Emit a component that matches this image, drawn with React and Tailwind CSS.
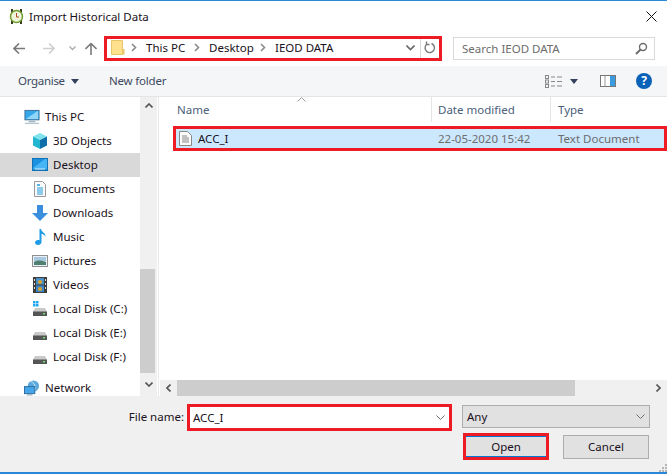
const Sep = () => (
  <svg width="6" height="9" viewBox="0 0 6 9" className="shrink-0"><path d="M1 1l3.5 3.5L1 8" fill="none" stroke="#8a8a8a" strokeWidth="1.6" /></svg>
);
const Chev = ({ c = "#707070", w = 1 }) => (
  <svg width="9" height="6" viewBox="0 0 9 6" className="shrink-0"><path d="M.5.5l4 4 4-4" fill="none" stroke={c} strokeWidth={w} /></svg>
);
const Disk = ({ win }) => (
  <svg width="16" height="16" viewBox="0 0 16 16">
    {win && <g fill="#1ea7f0"><rect x="1" y="0" width="2.5" height="2.5" /><rect x="4" y="0" width="2.5" height="2.5" /><rect x="1" y="3" width="2.5" height="2.5" /><rect x="4" y="3" width="2.5" height="2.5" /></g>}
    <path d="M3 7h10l2 4H1z" fill="#c9c9c9" />
    <rect x="1" y="10.5" width="14" height="4.5" fill="#555" />
    <rect x="11" y="12" width="2" height="1.5" fill="#6fe06f" />
  </svg>
);
const icons = {
  pc: <svg width="17" height="16" viewBox="0 0 17 16"><rect x="1" y="1" width="15" height="10" fill="#35a7ea" stroke="#3d6f96" /><path d="M2 10L14 2h1v8z" fill="#8fd6f8" /><rect x="5" y="12" width="7" height="1.5" fill="#9fb6c8" /><rect x="1" y="14" width="15" height="1.5" fill="#b9c7d2" /></svg>,
  cube: <svg width="16" height="16" viewBox="0 0 16 16"><path d="M8 0l7 3.5L8 7 1 3.5z" fill="#7fe3ee" /><path d="M1 3.5L8 7v9l-7-3.5z" fill="#22b6d0" /><path d="M15 3.5L8 7v9l7-3.5z" fill="#0f6fa8" /></svg>,
  desk: <svg width="16" height="14" viewBox="0 0 16 14"><rect x="0.5" y="0.5" width="15" height="12" fill="#1a90e0" stroke="#1272b5" /><path d="M1 10L13 1h2v10H1z" fill="#45b5f5" /><rect x="3" y="10.5" width="10" height="1" fill="#d8eefc" /></svg>,
  doc: <svg width="12" height="16" viewBox="0 0 12 16"><path d="M.5.5h8l3 3v12H.5z" fill="#fafafa" stroke="#9a9a9a" /><path d="M3 7h6M3 9h6M3 11h6M3 13h6" stroke="#1f9bdc" strokeWidth="1" /><path d="M3 4h3" stroke="#1f9bdc" strokeWidth="1.5" /></svg>,
  down: <svg width="16" height="16" viewBox="0 0 16 16"><path d="M5 0h6v8h5l-8 8-8-8h5z" fill="#3a8edb" /></svg>,
  music: <svg width="11" height="16" viewBox="0 0 11 16"><path d="M4.5 0h1.5c.5 3 4.500 3.500 4.500 7.500-1-1.500-2.500-2.500-4-2.800V13c0 1.800-1.800 3-3.500 3S0 15 0 13.500 1.500 11 3 11c.6 0 1.100.1 1.500.3z" fill="#1d9be6" /></svg>,
  pic: <svg width="16" height="12" viewBox="0 0 16 12"><rect x="0.5" y="0.500" width="15" height="11" fill="#e8f1f7" stroke="#8f8f8f" /><path d="M2 2h12v4H2z" fill="#a9c9e0" /><path d="M2 7c3-2 7-2 12 0v3H2z" fill="#4f7f70" /></svg>,
  vid: <svg width="14" height="16" viewBox="0 0 14 16"><rect width="14" height="16" fill="#3b3b3b" /><rect x="3" y="1" width="8" height="6.500" fill="#4a90c8" /><rect x="3" y="8.500" width="8" height="6.500" fill="#3f86c4" /><circle cx="7" cy="5" r="2" fill="#d9a32a" /><circle cx="7" cy="12" r="2" fill="#d9a32a" /><g fill="#ddd"><rect x="1" y="2" width="1" height="2" /><rect x="1" y="6" width="1" height="2" /><rect x="1" y="10" width="1" height="2" /><rect x="12" y="2" width="1" height="2" /><rect x="12" y="6" width="1" height="2" /><rect x="12" y="10" width="1" height="2" /></g></svg>,
  net: <svg width="17" height="16" viewBox="0 0 17 16"><circle cx="10" cy="6" r="6" fill="#5ba8dd" /><path d="M7 1c3 1 5 3 5 9" stroke="#d6ecf8" fill="none" /><rect x="0.500" y="6.500" width="11" height="7.500" fill="#45a5e8" stroke="#2c6c9c" /><rect x="3" y="14.500" width="6" height="1.500" fill="#9fb6c8" /></svg>,
};
const Row = ({ icon, label, active, top }) => (
  <div className={`h-6 flex items-center shrink-0 ${active ? "bg-[#d9d9d9]" : ""} ${top ? "pl-6" : "pl-8"}`}>
    <span className="w-4 h-4 flex items-center justify-center shrink-0 mr-[5px]">{icon}</span>
    <span className="text-[#1a1020] whitespace-nowrap">{label}</span>
  </div>
);

export default function App() {
  return (
    <div className="w-[667px] h-[474px] flex flex-col overflow-hidden bg-white border-t border-b-2 border-[#2b88d8] text-[11.5px] text-black font-['Noto_Sans','Liberation_Sans',sans-serif]">
      <div className="h-[31px] flex items-center pl-[9px] pr-[9px] shrink-0">
        <svg width="15" height="15" viewBox="0 0 15 15" className="mr-[5px]"><rect x="2" y="0" width="2" height="15" fill="#3a3a20" /><rect x="11" y="0" width="2" height="15" fill="#3a3a20" /><circle cx="7.500" cy="7.500" r="6" fill="#eef5d8" stroke="#6f9e2e" strokeWidth="1.500" /><path d="M7.500 4v4h2.500" stroke="#b2472a" fill="none" /></svg>
        <span className="text-[#1a1020]">Import Historical Data</span>
        <svg width="11" height="11" viewBox="0 0 11 11" className="ml-auto mr-[1px]"><path d="M.5.500l10 10M10.500.500l-10 10" stroke="#111" strokeWidth="1" /></svg>
      </div>
      <div className="h-[34px] pb-px flex items-center shrink-0">
        <div className="w-[104px] flex items-center pl-[13px] shrink-0">
          <svg width="12" height="11" viewBox="0 0 12 11"><path d="M6 .500L1 5.500l5 5M1 5.500h11" fill="none" stroke="#7a7a7a" strokeWidth="1.600" /></svg>
          <svg width="12" height="11" viewBox="0 0 12 11" className="ml-[18px]"><path d="M6 .500l5 5-5 5M11 5.500H0" fill="none" stroke="#cfcfcf" strokeWidth="1.600" /></svg>
          <svg width="7" height="5" viewBox="0 0 7 5" className="ml-[14px]"><path d="M.500.500l3 3 3-3" fill="none" stroke="#aaa" strokeWidth="1.300" /></svg>
          <svg width="12" height="12" viewBox="0 0 12 12" className="ml-[9px]"><path d="M.500 6L6 .500 11.500 6M6 .500V12" fill="none" stroke="#7a7a7a" strokeWidth="1.600" /></svg>
        </div>
        <div className="w-[338px] h-[25px] border-[3px] border-[#ed1c24] flex items-center shrink-0 pl-[4px] pb-[2px] text-[#1a1020]">
          <svg width="14" height="15" viewBox="0 0 14 15" className="mr-[6px] shrink-0"><path d="M.500.500h11v14H.500z" fill="#ffe08c" stroke="#e5c76a" /><path d="M11.500 9h2v5.500h-2z" fill="#e9c766" /></svg>
          <Sep />
          <span className="ml-[9px] w-[48px]">This PC</span>
          <Sep />
          <span className="ml-[9px] w-[51px]">Desktop</span>
          <Sep />
          <span className="ml-[9px]">IEOD DATA</span>
          <span className="ml-auto mr-[5px]"><Chev c="#6a6a6a" w={1.6} /></span>
          <span className="w-px self-stretch -mb-[2px] bg-[#d9d9d9]" />
          <svg width="12" height="13" viewBox="0 0 12 13" className="mx-[3px]"><path d="M7.500 2.500A4.700 4.700 0 1 1 2.500 3.500M2.500 .5v3h3" fill="none" stroke="#7a7a7a" strokeWidth="1.400" /></svg>
        </div>
        <div className="ml-[11px] w-[202px] h-[23px] border border-[#d9d9d9] flex items-center pl-[8px] pr-[6px] text-[#6d6d6d]">
          <span>Search IEOD DATA</span>
          <svg width="13" height="13" viewBox="0 0 13 13" className="ml-auto"><circle cx="8" cy="5" r="3.500" fill="none" stroke="#6d6d6d" strokeWidth="1.400" /><path d="M5.500 7.500L1 12" stroke="#6d6d6d" strokeWidth="2" /></svg>
        </div>
      </div>
      <div className="h-[31px] bg-[#f5f6f7] border-b border-[#e5e5e5] flex items-center pl-[18px] shrink-0 text-[#3c4a60]">
        <span className="w-[53px] tracking-[-0.3px]">Organise</span>
        <svg width="8" height="5" viewBox="0 0 8 5"><path d="M0 0h8L4 5z" fill="#33415c" /></svg>
        <span className="ml-[30px] tracking-[-0.2px]">New folder</span>
        <svg width="17" height="13" viewBox="0 0 17 13" className="ml-auto"><g fill="none" stroke="#888"><rect x=".5" y=".5" width="3" height="3" /><rect x=".5" y="5" width="3" height="3" /><rect x=".5" y="9.500" width="3" height="3" /></g><path d="M6 2h4M12 2h5M6 6.500h4M12 6.500h5M6 11h4M12 11h5" stroke="#888" /></svg>
        <svg width="8" height="5" viewBox="0 0 8 5" className="ml-[8px]"><path d="M0 0h8L4 5z" fill="#33415c" /></svg>
        <svg width="16" height="12" viewBox="0 0 16 12" className="ml-[22px]"><rect x=".5" y=".5" width="15" height="11" fill="#fff" stroke="#777" /><rect x="10" y="1" width="5" height="10" fill="#3c9be0" /><path d="M5 1v10" stroke="#999" /></svg>
        <span className="ml-[20px] mr-[15px] w-4 h-4 rounded-full bg-[#0a62b8] text-white flex items-center justify-center font-bold text-[12px] leading-none">?</span>
      </div>
      <div className="flex-1 flex min-h-0">
        <div className="w-[140px] pt-[8px] flex flex-col overflow-hidden shrink-0">
          <Row top icon={icons.pc} label="This PC" />
          <Row icon={icons.cube} label="3D Objects" />
          <Row active icon={icons.desk} label="Desktop" />
          <Row icon={icons.doc} label="Documents" />
          <Row icon={icons.down} label="Downloads" />
          <Row icon={icons.music} label="Music" />
          <Row icon={icons.pic} label="Pictures" />
          <Row icon={icons.vid} label="Videos" />
          <Row icon={<Disk win />} label="Local Disk (C:)" />
          <Row icon={<Disk />} label="Local Disk (E:)" />
          <Row icon={<Disk />} label="Local Disk (F:)" />
          <div className="h-[7px] shrink-0" />
          <Row top icon={icons.net} label="Network" />
        </div>
        <div className="w-[17px] bg-[#f0f0f0] flex flex-col shrink-0">
          <div className="h-[17px] flex items-center justify-center"><svg width="8" height="5" viewBox="0 0 8 5"><path d="M.5 4.500L4 1l3.500 3.500" fill="none" stroke="#555" strokeWidth="1.600" /></svg></div>
          <div className="h-[155px]" />
          <div className="h-[104px] w-[15px] bg-[#cdcdcd]" />
          <div className="flex-1 flex items-center justify-center"><svg width="8" height="5" viewBox="0 0 8 5"><path d="M.5.500L4 4 7.500.500" fill="none" stroke="#555" strokeWidth="1.600" /></svg></div>
        </div>
        <div className="w-px bg-white shrink-0" />
        <div className="flex-1 border-l border-[#eaeaea] flex flex-col min-w-0 relative">
          <svg width="9" height="5" viewBox="0 0 9 5" className="absolute left-[138px] top-0"><path d="M.5 4.500l4-4 4 4" fill="none" stroke="#9a9a9a" /></svg>
          <div className="h-[25px] flex items-center text-[#4c607a] shrink-0 pl-[18px]">
            <span className="w-[255px] h-full flex items-center border-r border-[#e5e5e5]">Name</span>
            <span className="w-[119px] h-full flex items-center pl-[6px] border-r border-[#e5e5e5]">Date modified</span>
            <span className="pl-[7px] h-full flex items-center">Type</span>
          </div>
          <div className="ml-[14px] h-[25px] mt-[4px] border-[3px] border-[#ed1c24] bg-[#cce8ff] flex items-center shrink-0">
            <svg width="13" height="15" viewBox="0 0 13 15" className="ml-[3px] shrink-0"><path d="M.500.500h8l4 4v10H.500z" fill="#fbfbfb" stroke="#888" /><path d="M3 5h5M3 7h7M3 9h7M3 11h7" stroke="#888" /></svg>
            <span className="w-[240px] ml-[6px] text-[#1a1020]">ACC_I</span>
            <span className="w-[120px] text-[#6d6d6d]">22-05-2020 15:42</span>
            <span className="text-[#6d6d6d]">Text Document</span>
          </div>
          <div className="flex-1" />
          <div className="h-[16px] bg-[#f0f0f0] flex items-center shrink-0 ml-px">
            <div className="w-[17px] flex items-center justify-center shrink-0"><svg width="5" height="8" viewBox="0 0 5 8"><path d="M4.500.500L1 4l3.500 3.500" fill="none" stroke="#555" strokeWidth="1.600" /></svg></div>
            <div className="w-[398px] h-full bg-[#cdcdcd]" />
            <div className="flex-1 flex items-center justify-end pr-[6px]"><svg width="5" height="8" viewBox="0 0 5 8"><path d="M.5.500L4 4 .5 7.500" fill="none" stroke="#555" strokeWidth="1.600" /></svg></div>
          </div>
        </div>
      </div>
      <div className="h-[76px] bg-[#f0f0f0] flex flex-col shrink-0 relative">
        <div className="flex items-start pt-[8px] h-[37px] shrink-0">
          <span className="w-[187px] pr-[3px] text-right leading-[25px] text-[#1a1020]">File name:</span>
          <div className="w-[265px] h-[27px] border-[3px] border-[#ed1c24] bg-white flex items-center pl-[3px] pr-[4px] text-[#1a1020]">
            <span>ACC_I</span>
            <span className="ml-auto"><Chev /></span>
          </div>
          <div className="ml-[10px] mt-px w-[188px] h-[23px] bg-[#e1e1e1] border border-[#adadad] flex items-center pl-[4px] pr-[4px] text-[#1a1020]">
            <span>Any</span>
            <span className="ml-auto"><Chev /></span>
          </div>
        </div>
        <div className="flex items-start pl-[463px]">
          <div className="w-[86px] h-[27px] border-[3px] border-[#ed1c24] bg-[#e1e1e1] flex items-center justify-center text-[#1a1020]"><span className="w-full h-full flex items-center justify-center border-y border-[#0078d7]">Open</span></div>
          <div className="ml-[14px] mt-[2px] w-[86px] h-[24px] border border-[#adadad] bg-[#e1e1e1] flex items-center justify-center text-[#1a1020]">Cancel</div>
        </div>
        <svg width="8" height="8" viewBox="0 0 8 8" className="absolute right-0 bottom-0"><g fill="#b5b5b5"><rect x="6" y="0" width="2" height="2" /><rect x="3" y="3" width="2" height="2" /><rect x="6" y="3" width="2" height="2" /><rect x="0" y="6" width="2" height="2" /><rect x="3" y="6" width="2" height="2" /><rect x="6" y="6" width="2" height="2" /></g></svg>
      </div>
    </div>
  );
}
